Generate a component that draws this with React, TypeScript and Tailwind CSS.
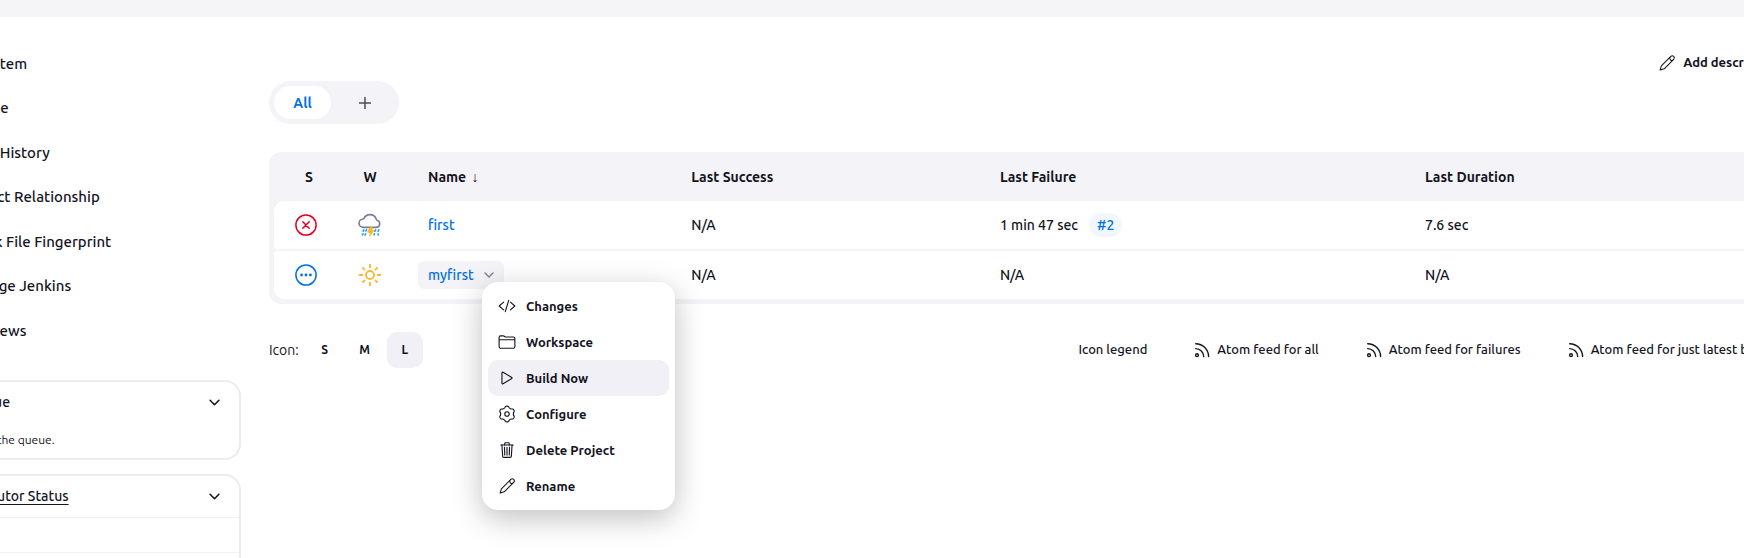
import { ReactNode } from "react";
import { IoCodeSlashOutline, IoFolderOutline, IoPlayOutline, IoTrashOutline } from "react-icons/io5";

function PencilIcon() {
  return (
    <svg viewBox="0 0 24 24" className="size-[18px] shrink-0" fill="none" stroke="currentColor" strokeWidth="1.4" strokeLinejoin="round" strokeLinecap="round" aria-hidden="true">
      <path d="M2.8 21.4l1.7-5.5L17.1 3.3a2.6 2.6 0 0 1 3.8 3.8L8.3 19.7z" />
      <path d="M15.8 4.6a3 3 0 0 0 3.8 3.8" />
    </svg>
  );
}

const gearOutline =
  Array.from({ length: 120 }, (_, i) => {
    const angle = (i / 120) * Math.PI * 2;
    const radius = 9.5 + 1.1 * Math.tanh(1.6 * Math.cos(6 * angle));
    const x = 12 + radius * Math.sin(angle);
    const y = 12 - radius * Math.cos(angle);
    return (i === 0 ? "M" : "L") + x.toFixed(2) + " " + y.toFixed(2);
  }).join("") + "Z";

function GearIcon() {
  return (
    <svg viewBox="0 0 24 24" className="size-[18px] shrink-0" fill="none" stroke="currentColor" strokeWidth="1.5" strokeLinejoin="round" aria-hidden="true">
      <circle cx="12" cy="12" r="3" />
      <path d={gearOutline} />
    </svg>
  );
}

function FeedIcon() {
  return (
    <svg viewBox="0 0 18 18" className="size-[18px] shrink-0" fill="none" stroke="currentColor" strokeWidth="1.4" strokeLinecap="round" aria-hidden="true">
      <circle cx="4" cy="14.2" r="1.4" />
      <path d="M2.7 7.6a8 8 0 0 1 8 8" />
      <path d="M2.7 2.7a12.9 12.9 0 0 1 12.9 12.9" />
    </svg>
  );
}

function Chevron({ className }: { className: string }) {
  return (
    <svg viewBox="0 0 12 12" className={className} fill="none" stroke="currentColor" strokeWidth="1.7" strokeLinecap="round" strokeLinejoin="round" aria-hidden="true">
      <path d="M1.2 3.6L6 8.4l4.8-4.8" />
    </svg>
  );
}

function FailedIcon() {
  return (
    <svg viewBox="0 0 22 22" className="mx-auto size-[22px]" fill="none" stroke="#e6001f" strokeWidth="1.5" strokeLinecap="round" role="img" aria-label="Failed">
      <circle cx="11" cy="11" r="10.1" />
      <path d="M7.8 7.8l6.4 6.4M14.2 7.8l-6.4 6.4" />
    </svg>
  );
}

function NotBuiltIcon() {
  return (
    <svg viewBox="0 0 22 22" className="mx-auto size-[22px]" role="img" aria-label="Not built">
      <circle cx="11" cy="11" r="10.1" fill="none" stroke="#0070ea" strokeWidth="1.5" />
      <g fill="#0070ea">
        <circle cx="6.6" cy="11" r="1.4" />
        <circle cx="11" cy="11" r="1.4" />
        <circle cx="15.4" cy="11" r="1.4" />
      </g>
    </svg>
  );
}

function StormIcon() {
  return (
    <svg viewBox="0 0 24 24" className="mx-auto size-6" fill="none" strokeLinecap="round" strokeLinejoin="round" role="img" aria-label="Storm">
      <path d="M5.4 14.4a4.2 4.2 0 0 1-.3-8.4c.3 0 .6-.1.8-.4a6.6 6.6 0 0 1 12-.2c.2.9.5 1.5 1.2 1.8a3.7 3.7 0 0 1-.5 7.2z" stroke="#7b7b93" strokeWidth="1.6" />
      <path d="M5.8 17l-.7 1.2M5 20.8l-.6 1M8.6 16.8l-.7 1.2M7.6 21l-.6 1M16.4 20.8l-.4 1M17.6 17l-.7 1.2M20.8 17l-.7 1.2M20 21l.4 .8" stroke="#2aa5ee" strokeWidth="1.7" />
      <path d="M11.6 15l-1.8 4.2h2.6l-.8 4 4.2-5.8h-2.4l1-2.4z" fill="#ffb61a" stroke="#ffb61a" strokeWidth=".9" />
    </svg>
  );
}

function SunIcon() {
  return (
    <svg viewBox="0 0 24 24" className="mx-auto size-6" fill="none" stroke="#fdb62d" strokeWidth="1.8" strokeLinecap="round" role="img" aria-label="Sunny">
      <circle cx="12" cy="12" r="4" />
      <path d="M12 1.7v2.6M12 19.7v2.6M1.7 12h2.6M19.7 12h2.6M4.8 4.8l1.8 1.8M17.4 17.4l1.8 1.8M4.8 19.2l1.8-1.8M17.4 6.6l1.8-1.8" />
    </svg>
  );
}

const tasks = ["New Item", "People", "Build History", "Project Relationship", "Check File Fingerprint", "Manage Jenkins", "My Views"];

const menu: { label: string; icon: ReactNode; active?: boolean }[] = [
  { label: "Changes", icon: <IoCodeSlashOutline className="size-[18px]" /> },
  { label: "Workspace", icon: <IoFolderOutline className="size-[18px]" /> },
  { label: "Build Now", icon: <IoPlayOutline className="size-[18px]" />, active: true },
  { label: "Configure", icon: <GearIcon /> },
  { label: "Delete Project", icon: <IoTrashOutline className="size-[18px]" /> },
  { label: "Rename", icon: <PencilIcon /> },
];

function ContextMenu() {
  return (
    <div role="menu" className="absolute top-[21px] left-16 z-10 w-[193px] rounded-2xl bg-white p-1.5 text-[13px] font-semibold text-[#14141f] shadow-[0_8px_30px_rgba(0,0,0,0.25)]">
      {menu.map((item) => (
        <button
          key={item.label}
          role="menuitem"
          className={
            item.active
              ? "flex h-9 w-full items-center gap-2.5 rounded-[10px] bg-[#f1f0f7] px-2.5"
              : "flex h-9 w-full items-center gap-2.5 rounded-[10px] px-2.5"
          }
        >
          {item.icon}
          {item.label}
        </button>
      ))}
    </div>
  );
}

function Sidebar() {
  return (
    <aside className="w-[335px] shrink-0">
      <nav className="mt-[25px] grid h-[311px] auto-rows-fr pl-[55px] text-[15px] font-medium">
        {tasks.map((task) => (
          <a key={task} href="#" className="flex items-center">
            {task}
          </a>
        ))}
      </nav>
      <section className="mt-[27px] h-20 rounded-2xl border-2 border-[#ebebf3] pr-[19px] pl-[23px]">
        <div className="flex h-10 items-center justify-between">
          <h2 className="text-sm font-medium">Build Queue</h2>
          <button aria-label="Collapse build queue">
            <Chevron className="size-[11px]" />
          </button>
        </div>
        <p className="mt-2.5 text-xs">No builds in the queue.</p>
      </section>
      <section className="mt-3.5 h-[84px] overflow-hidden rounded-t-2xl border-2 border-b-0 border-[#ebebf3]">
        <div className="flex h-10 items-center justify-between pr-[19px] pl-[23px]">
          <a href="#" className="text-sm font-medium underline underline-offset-3">
            Build Executor Status
          </a>
          <button aria-label="Collapse executor status">
            <Chevron className="size-[11px]" />
          </button>
        </div>
        <div className="mt-px h-9 border-y border-[#f1f1f7]" />
      </section>
    </aside>
  );
}

function FeedLink({ children }: { children: ReactNode }) {
  return (
    <a href="#" className="flex h-9 items-center gap-1.5 px-3.5">
      <FeedIcon />
      {children}
    </a>
  );
}

const cell = "bg-white px-[26px]";
const head = "px-[26px] text-left font-bold";

function JobTable() {
  return (
    <div className="mt-7 rounded-xl bg-[#f3f3f8] px-[5px] pb-[3px]">
      <table className="w-full table-fixed border-separate border-spacing-x-0 border-spacing-y-0.5 text-sm font-medium">
        <thead>
          <tr className="h-[45px]">
            <th className="w-16 pl-1.5 font-bold">S</th>
            <th className="w-16 font-bold">W</th>
            <th className={head + " w-[17.4%]"}>
              Name <span className="ml-0.5 font-normal">↓</span>
            </th>
            <th className={head + " w-[20.4%]"}>Last Success</th>
            <th className={head + " w-[28.1%]"}>Last Failure</th>
            <th className={head}>Last Duration</th>
          </tr>
        </thead>
        <tbody>
          <tr className="h-12">
            <td className="rounded-tl-[10px] rounded-bl-[3px] bg-white"><FailedIcon /></td>
            <td className="bg-white"><StormIcon /></td>
            <td className={cell}><a href="#" className="text-[#0070ea]">first</a></td>
            <td className={cell}>N/A</td>
            <td className={cell}>
              <span className="flex items-center gap-[11px]">
                1 min 47 sec
                <a href="#" className="flex h-6 items-center rounded-full bg-[#f1f7ff] px-2 text-[#0070ea]">#2</a>
              </span>
            </td>
            <td className={cell}>7.6 sec</td>
          </tr>
          <tr className="h-12">
            <td className="rounded-tl-[3px] rounded-bl-[10px] bg-white"><NotBuiltIcon /></td>
            <td className="bg-white"><SunIcon /></td>
            <td className="bg-white px-4">
              <div className="relative flex">
                <div className="flex h-7 items-center gap-2.5 rounded-md bg-[#f3f3f8] px-2.5">
                  <a href="#" className="text-[#0070ea]">myfirst</a>
                  <button aria-label="Open menu for myfirst"><Chevron className="size-2.5 text-[#85858c]" /></button>
                </div>
                <ContextMenu />
              </div>
            </td>
            <td className={cell}>N/A</td>
            <td className={cell}>N/A</td>
            <td className={cell}>N/A</td>
          </tr>
        </tbody>
      </table>
    </div>
  );
}

export default function App() {
  return (
    <div className="overflow-hidden bg-white font-['Ubuntu','Noto_Sans',sans-serif] text-[#14141f]">
      <header className="h-[17px] bg-[#f5f5f8]" />
      <div className="-mr-[48px] -ml-[94px] flex gap-7">
        <Sidebar />
        <main className="min-w-0 flex-1 pt-7">
          <div className="flex justify-end text-[13px] font-semibold">
            <button className="flex h-9 items-center gap-[7px] px-3">
              <PencilIcon />
              Add description
            </button>
          </div>
          <div className="flex w-fit gap-[5px] rounded-full bg-[#f3f3f8] p-[5px]">
            <a href="#" className="flex h-[33px] w-[57px] items-center justify-center rounded-full bg-white text-sm font-bold text-[#0070ea]">All</a>
            <button aria-label="New view" className="flex h-[33px] w-[58px] items-center justify-center text-[#4d4d57]">
              <svg viewBox="0 0 12 12" className="size-3" stroke="currentColor" strokeWidth="1.5" aria-hidden="true"><path d="M6 0v12M0 6h12" /></svg>
            </button>
          </div>
          <JobTable />
          <div className="mt-7 flex items-center justify-between">
            <div className="flex items-center gap-1 text-sm">
              <span className="mr-1">Icon:</span>
              <button className="size-9 text-xs font-semibold">S</button>
              <button className="size-9 text-xs font-semibold">M</button>
              <button className="size-9 rounded-[10px] bg-[#f1f0f7] text-xs font-semibold">L</button>
            </div>
            <div className="flex items-center gap-[18px] pr-0.5 text-[13px] font-medium whitespace-nowrap">
              <a href="#" className="px-3.5">Icon legend</a>
              <FeedLink>Atom feed for all</FeedLink>
              <FeedLink>Atom feed for failures</FeedLink>
              <FeedLink>Atom feed for just latest builds</FeedLink>
            </div>
          </div>
        </main>
      </div>
    </div>
  );
}
